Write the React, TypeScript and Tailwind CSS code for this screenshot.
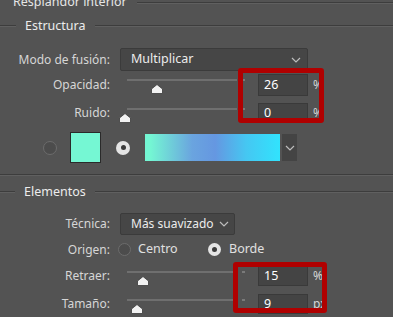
import React from "react";

const Groove = ({ className = "" }: { className?: string }) => (
  <div className={`flex flex-col ${className}`}>
    <div className="h-px bg-[#3d3d3d]" />
    <div className="h-px bg-[#606060]" />
  </div>
);

function Legend({ label, lead, className = "" }: { label: string; lead: number; className?: string }) {
  return (
    <div className={`flex items-center h-[14px] ${className}`}>
      <div style={{ width: lead }} className="shrink-0">
        <Groove />
      </div>
      <span className="px-[9px] text-[12.5px] text-[#ececec] whitespace-nowrap leading-none">{label}</span>
      <Groove className="flex-1" />
    </div>
  );
}

const Chevron = ({ className = "" }: { className?: string }) => (
  <svg width="10" height="6" viewBox="0 0 10 6" className={className}>
    <path d="M1 1 L5 5 L9 1" fill="none" stroke="#bdbdbd" strokeWidth="1.2" />
  </svg>
);

function Label({ children }: { children: React.ReactNode }) {
  return <div className="w-[110px] shrink-0 text-right text-[12px] text-[#d6d6d6] leading-none">{children}</div>;
}

function Slider({ pos }: { pos: number }) {
  return (
    <div className="relative w-[131px] h-full ml-[17px] shrink-0">
      <div className="absolute left-0 top-[5px] w-[110px] h-[2px] bg-[#6f6f6f]" />
      <div className="absolute left-[115px] top-[5px] w-[3px] h-[2px] bg-[#7a7a7a]" />
      <svg
        width="12"
        height="10"
        viewBox="0 0 12 10"
        className="absolute top-[10px]"
        style={{ left: pos - 6 }}
      >
        <polygon points="6,0.5 11.5,5 11.5,9.5 0.5,9.5 0.5,5" fill="#f2f2f2" stroke="#3a3a3a" strokeWidth="0.8" />
      </svg>
    </div>
  );
}

function NumField({ value, unit }: { value: string; unit: string }) {
  return (
    <div className="flex items-center h-full">
      <div className="w-[50px] h-full bg-[#444444] border border-[#3a3a3a] flex items-center pl-[5px] text-[12.5px] text-white leading-none">
        {value}
      </div>
      <span className="ml-[5px] text-[12px] text-[#d6d6d6] leading-none">{unit}</span>
    </div>
  );
}

function Radio({ on, size = 13 }: { on: boolean; size?: number }) {
  return on ? (
    <div
      style={{ width: size, height: size }}
      className="rounded-full bg-[#e4e4e4] flex items-center justify-center shrink-0"
    >
      <div className="w-[5px] h-[5px] rounded-full bg-[#3a3a3a]" />
    </div>
  ) : (
    <div
      style={{ width: size, height: size }}
      className="rounded-full border-[1.5px] border-[#6c6c6c] bg-[#4c4c4c] shrink-0"
    />
  );
}

export default function App() {
  return (
    <div
      className="relative w-[393px] h-[317px] overflow-hidden bg-[#535353] flex flex-col"
      style={{ fontFamily: '"Noto Sans", "Open Sans", sans-serif' }}
    >
      {/* group title (clipped at top) */}
      <div className="flex items-center h-[14px] -mt-[5px]">
        <span className="pl-[13px] pr-[10px] text-[12.5px] text-[#e6e6e6] leading-none whitespace-nowrap">
          Resplandor interior
        </span>
        <Groove className="flex-1 mt-[2px]" />
      </div>

      <Legend label="Estructura" lead={16} className="mt-[10px]" />

      <div className="flex items-center h-[23px] mt-[15px]">
        <Label>Modo de fusión:</Label>
        <div className="ml-[10px] w-[188px] h-full rounded-[2px] bg-[#464646] border border-[#3b3b3b] flex items-center justify-between pl-[10px] pr-[6px]">
          <span className="text-[12.5px] text-[#ececec] leading-none">Multiplicar</span>
          <Chevron />
        </div>
      </div>

      <div className="flex items-center h-[22px] mt-[3px]">
        <Label>Opacidad:</Label>
        <Slider pos={30} />
        <NumField value="26" unit="%" />
      </div>

      <div className="flex items-center h-[20px] mt-[7px]">
        <Label>Ruido:</Label>
        <Slider pos={-2} />
        <NumField value="0" unit="%" />
      </div>

      <div className="flex items-center h-[31px] mt-[9px]">
        <div className="ml-[43px]">
          <Radio on={false} size={14} />
        </div>
        <div className="ml-[13px] w-[31px] h-[31px] bg-[#75f7d3] border border-[#2a2a2a]" />
        <div className="ml-[15px]">
          <Radio on size={14} />
        </div>
        <div className="ml-[15px] w-[135px] h-[27px] bg-[linear-gradient(to_right,#74f6d3_4%,#6aa4df_35%,#6597e1_52%,#45c7f2_75%,#31e3fd_100%)]" />
        <div className="ml-[2px] w-[15px] h-[27px] bg-[#444444] flex items-center justify-center">
          <Chevron />
        </div>
      </div>

      <Groove className="mt-[11px]" />

      <Legend label="Elementos" lead={15} className="mt-[9px]" />

      <div className="flex items-center h-[22px] mt-[14px]">
        <Label>Técnica:</Label>
        <div className="ml-[10px] w-[115px] h-full rounded-[2px] bg-[#464646] border border-[#3b3b3b] flex items-center justify-between pl-[10px] pr-[5px]">
          <span className="text-[12px] text-[#ececec] leading-none whitespace-nowrap">Más suavizado</span>
          <Chevron />
        </div>
      </div>

      <div className="flex items-center h-[17px] mt-[6px]">
        <Label>Origen:</Label>
        <div className="ml-[8px] w-[90px] flex items-center">
          <Radio on={false} />
          <span className="ml-[7px] text-[12.5px] text-[#e0e0e0] leading-none">Centro</span>
        </div>
        <div className="flex items-center">
          <Radio on />
          <span className="ml-[8px] text-[12.5px] text-[#e0e0e0] leading-none">Borde</span>
        </div>
      </div>

      <div className="flex items-center h-[20px] mt-[8px]">
        <Label>Retraer:</Label>
        <Slider pos={16} />
        <NumField value="15" unit="%" />
      </div>

      <div className="flex items-center h-[20px] mt-[8px]">
        <Label>Tamaño:</Label>
        <Slider pos={10} />
        <NumField value="9" unit="px" />
      </div>

      {/* red highlight frames drawn over the fields */}
      <div className="absolute left-[238px] top-[68px] w-[86px] h-[55px] border-[5px] border-[#b00000] rounded-[3px]" />
      <div className="absolute left-[233px] top-[262px] w-[94px] h-[51px] border-[5px] border-[#b00000] rounded-[3px]" />
    </div>
  );
}
